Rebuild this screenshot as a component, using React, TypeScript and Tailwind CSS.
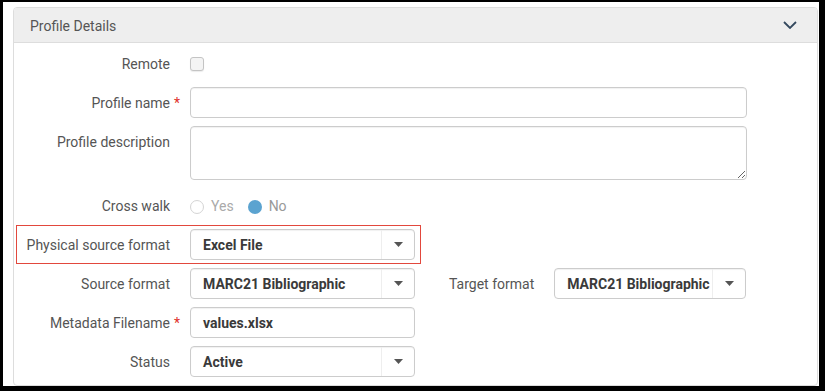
import React from "react";

const font = { fontFamily: "Roboto, 'Liberation Sans', sans-serif" };

function Caret() {
  return (
    <svg width="9" height="5" viewBox="0 0 9 5" className="block">
      <path d="M0 0 L9 0 L4.5 5 Z" fill="#555" />
    </svg>
  );
}

function Select({ value, width }: { value: string; width: string }) {
  return (
    <div
      className={`${width} h-[31px] flex items-center rounded-[4px] border border-[#cccccc] bg-white shadow-[inset_0_1px_1px_rgba(0,0,0,0.06)]`}
    >
      <div className="flex-1 pl-[12px] pt-[2px] text-[14px] font-bold text-[#3a3a3a] truncate">{value}</div>
      <div className="w-[33px] h-full border-l border-[#eeeeee] flex items-center justify-center">
        <Caret />
      </div>
    </div>
  );
}

function Label({ text, required, w = "w-[156px]" }: { text: string; required?: boolean; w?: string }) {
  return (
    <div className={`${w} shrink-0 pt-[2px] text-right text-[14px] text-[#555] relative`}>
      {text}
      {required && <span className="absolute left-full ml-[4px] text-[#e0302a]">*</span>}
    </div>
  );
}

export default function App() {
  return (
    <div
      className="w-[825px] h-[391px] bg-white border-black border-t-[2px] border-l-[3px] border-r-[6px] border-b-[5px] pt-[5px] pl-[10px]"
      style={font}
    >
      <div className="w-[805px] h-[379px] border border-[#dddddd] rounded-[4px] overflow-hidden flex flex-col">
        <div className="h-[35px] shrink-0 bg-[#eeeeee] border-b border-[#dddddd] flex items-center justify-between pl-[16px] pr-[20px]">
          <span className="text-[14px] pt-[2px] text-[#555]">Profile Details</span>
          <svg width="14" height="8" viewBox="0 0 14 8">
            <path d="M1 1 L7 7 L13 1" fill="none" stroke="#34495e" strokeWidth="1.8" />
          </svg>
        </div>
        <div className="flex flex-col pt-[5px]">
          {/* Remote */}
          <div className="h-[31px] flex items-center gap-[20px]">
            <Label text="Remote" />
            <div className="w-[14px] h-[14px] mt-[1px] rounded-[3px] border border-[#c4c4c4] bg-[#f4f4f4] shadow-[0_1px_1px_rgba(0,0,0,0.08)]" />
          </div>
          {/* Profile name */}
          <div className="h-[31px] mt-[8px] flex items-center gap-[20px]">
            <Label text="Profile name" required />
            <div className="w-[557px] h-[31px] rounded-[4px] border border-[#cccccc] bg-white shadow-[inset_0_1px_1px_rgba(0,0,0,0.06)]" />
          </div>
          {/* Profile description */}
          <div className="h-[54px] mt-[8px] flex items-start gap-[20px]">
            <div className="pt-[4px]">
              <Label text="Profile description" />
            </div>
            <textarea
              className="w-[557px] h-[54px] rounded-[4px] border border-[#cccccc] bg-white outline-none resize-y shadow-[inset_0_1px_1px_rgba(0,0,0,0.06)]"
              readOnly
            />
          </div>
          {/* Cross walk */}
          <div className="h-[31px] mt-[10px] flex items-center gap-[20px]">
            <Label text="Cross walk" />
            <div className="flex items-center pt-[2px] text-[14px] text-[#aaa]">
              <span className="w-[14px] h-[14px] rounded-full border border-[#d4d4d4] bg-white" />
              <span className="ml-[7px]">Yes</span>
              <span className="ml-[14px] w-[14px] h-[14px] rounded-full bg-[#5ba3d0]" />
              <span className="ml-[7px] text-[#999]">No</span>
            </div>
          </div>
          {/* Physical source format (highlighted) */}
          <div className="mt-[4px] ml-[2px] w-[405px] border border-[#e2483d] py-[3px] pr-[4px] flex items-center gap-[20px]">
            <Label text="Physical source format" w="w-[153px]" />
            <Select value="Excel File" width="w-[225px]" />
          </div>
          {/* Source format / Target format */}
          <div className="h-[31px] mt-[4px] flex items-center gap-[20px]">
            <Label text="Source format" />
            <Select value="MARC21 Bibliographic" width="w-[225px]" />
            <div className="ml-[14px] pt-[2px] text-[14px] text-[#555]">Target format</div>
            <Select value="MARC21 Bibliographic" width="w-[192px]" />
          </div>
          {/* Metadata Filename */}
          <div className="h-[31px] mt-[8px] flex items-center gap-[20px]">
            <Label text="Metadata Filename" required />
            <div className="w-[225px] h-[31px] flex items-center pl-[12px] pt-[2px] rounded-[4px] border border-[#cccccc] bg-white text-[14px] font-bold text-[#3a3a3a] shadow-[inset_0_1px_1px_rgba(0,0,0,0.06)]">
              values.xlsx
            </div>
          </div>
          {/* Status */}
          <div className="h-[31px] mt-[8px] flex items-center gap-[20px]">
            <Label text="Status" />
            <Select value="Active" width="w-[225px]" />
          </div>
        </div>
      </div>
    </div>
  );
}
